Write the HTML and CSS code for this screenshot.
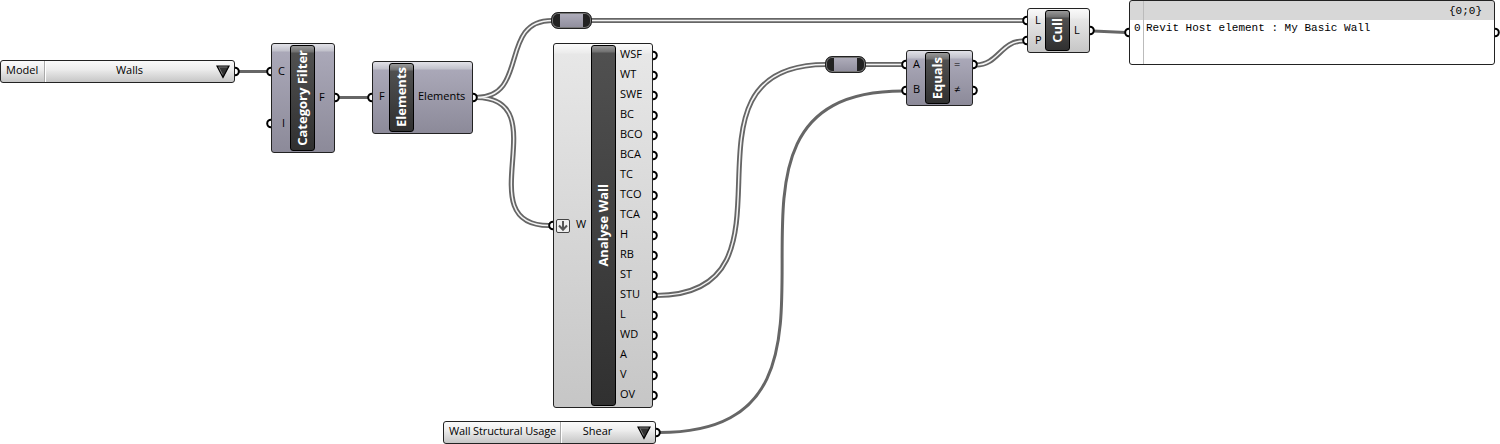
FILE: index.html
```html
<!DOCTYPE html>
<html lang="en">
<head>
<meta charset="utf-8">
<title>Wall definition</title>
<link rel="stylesheet" href="styles.css">
</head>
<body>
<main class="canvas">
<svg class="wires" width="1500" height="444" viewBox="0 0 1500 444">
  <defs>
    <path id="w1" d="M476 97.500C530 97.500 498 20.500 552 20.500"/>
    <path id="w2" d="M476 97.500C559 97.500 466 225.500 549 225.500"/>
    <path id="w3" d="M591 20.500H1024"/>
    <path id="w4" d="M656 295.500C816 295.500 660 64.500 826 64.500"/>
    <path id="w5" d="M865 64.500H903"/>
    <path id="w6" d="M976 65C998 65 1001 41 1023 41"/>
  </defs>
  <g class="wire">
    <path d="M239 71.500H268M338 97.500H369M1093 31L1126 32.500"/>
    <path d="M659 432.500C905 432.500 660 91 903 91"/>
  </g>
  <g class="wire-outer"><use href="#w1"/><use href="#w2"/><use href="#w3"/><use href="#w4"/><use href="#w5"/><use href="#w6"/></g>
  <g class="wire-inner"><use href="#w1"/><use href="#w2"/><use href="#w3"/><use href="#w4"/><use href="#w5"/><use href="#w6"/></g>
  <g class="grips">
    <circle cx="235" cy="71.500" r="3.800"/><circle cx="271" cy="71.500" r="3.800"/><circle cx="271" cy="123.500" r="3.800"/>
    <circle cx="335" cy="97.500" r="3.800"/><circle cx="372" cy="97.500" r="3.800"/><circle cx="473" cy="97.500" r="3.800"/>
    <circle cx="553" cy="225.500" r="3.800"/>
    <circle cx="653" cy="55.500" r="3.800"/><circle cx="653" cy="75.500" r="3.800"/><circle cx="653" cy="95.500" r="3.800"/>
    <circle cx="653" cy="115.500" r="3.800"/><circle cx="653" cy="135.500" r="3.800"/><circle cx="653" cy="155.500" r="3.800"/>
    <circle cx="653" cy="175.500" r="3.800"/><circle cx="653" cy="195.500" r="3.800"/><circle cx="653" cy="215.500" r="3.800"/>
    <circle cx="653" cy="235.500" r="3.800"/><circle cx="653" cy="255.500" r="3.800"/><circle cx="653" cy="275.500" r="3.800"/>
    <circle cx="653" cy="295.500" r="3.800"/><circle cx="653" cy="315.500" r="3.800"/><circle cx="653" cy="335.500" r="3.800"/>
    <circle cx="653" cy="355.500" r="3.800"/><circle cx="653" cy="375.500" r="3.800"/><circle cx="653" cy="395.500" r="3.800"/>
    <circle cx="656" cy="432.500" r="3.800"/>
    <circle cx="906" cy="64.500" r="3.800"/><circle cx="906" cy="90.500" r="3.800"/><circle cx="973" cy="64.500" r="3.800"/><circle cx="973" cy="90.500" r="3.800"/>
    <circle cx="1027" cy="20.500" r="3.800"/><circle cx="1027" cy="40.500" r="3.800"/><circle cx="1090" cy="30.500" r="3.800"/>
    <circle cx="1129" cy="32.500" r="3.800"/><circle cx="1495" cy="32.500" r="3.800"/>
  </g>
</svg>

<section class="node light picker model">
  <span class="name">Model</span><span class="value">Walls</span>
  <svg class="arrow" width="14" height="14" viewBox="0 0 14 14"><path class="arrow-fill" d="M1 1H13L7 12.500Z"/><path class="arrow-shine" d="M2.500 2H11.500M3 2.500L6.500 9.500"/></svg>
</section>

<section class="node violet category">
  <div class="ports in"><span>C</span><span>I</span></div>
  <div class="title"><span>Category Filter</span></div>
  <div class="ports out"><span>F</span></div>
</section>

<section class="node violet elements">
  <div class="ports in"><span>F</span></div>
  <div class="title"><span>Elements</span></div>
  <div class="ports out"><span>Elements</span></div>
</section>

<div class="relay relay-top"></div>

<section class="node light analyse">
  <div class="ports in">
    <svg class="flatten" width="14" height="14" viewBox="0 0 14 14"><rect class="flatten-box" x=".5" y=".5" width="13" height="13" rx="1.500"/><path class="flatten-arrow" d="M7 2V10.500M3 6.500L7 10.800L11 6.500"/></svg>
    <span>W</span>
  </div>
  <div class="title"><span>Analyse Wall</span></div>
  <div class="ports out">
    <span>WSF</span><span>WT</span><span>SWE</span><span>BC</span><span>BCO</span><span>BCA</span><span>TC</span><span>TCO</span><span>TCA</span><span>H</span><span>RB</span><span>ST</span><span>STU</span><span>L</span><span>WD</span><span>A</span><span>V</span><span>OV</span>
  </div>
</section>

<section class="node light picker usage">
  <span class="name">Wall Structural Usage</span><span class="value">Shear</span>
  <svg class="arrow" width="14" height="14" viewBox="0 0 14 14"><path class="arrow-fill" d="M1 1H13L7 12.500Z"/><path class="arrow-shine" d="M2.500 2H11.500M3 2.500L6.500 9.500"/></svg>
</section>

<div class="relay relay-mid"></div>

<section class="node violet equals">
  <div class="ports in"><span>A</span><span>B</span></div>
  <div class="title"><span>Equals</span></div>
  <div class="ports out"><span>=</span><span>≠</span></div>
</section>

<section class="node light cull">
  <div class="ports in"><span>L</span><span>P</span></div>
  <div class="title"><span>Cull</span></div>
  <div class="ports out"><span>L</span></div>
</section>

<section class="panel">
  <header class="path">{0;0}</header>
  <div class="row"><span class="index">0</span><span class="item">Revit Host element : My Basic Wall</span></div>
</section>
</main>
</body>
</html>
```
FILE: styles.css
```css
* { box-sizing: border-box; }
body { margin: 0; background: #fff; }
.canvas {
  position: relative;
  width: 1500px;
  height: 444px;
  overflow: hidden;
  font: 11px/20px "Open Sans", "Noto Sans", sans-serif;
  color: #000;
}
.wires { position: absolute; left: 0; top: 0; fill: none; }
.wire { stroke: #666; stroke-width: 3; }
.wire-outer { stroke: #666; stroke-width: 5.2; }
.wire-inner { stroke: #f4f4f4; stroke-width: 1.5; }
.grips { fill: #fff; stroke: #000; stroke-width: 2; }

/* Nodes on the free canvas */
.node {
  position: absolute;
  display: flex;
  border: 1px solid #222;
  border-radius: 3px;
}
.light { background: linear-gradient(#fafafa 0, #ececec 9px, #e7e7e7 10px, #c6c6c6 100%); }
.violet { background: linear-gradient(#e2e2e8 0, #c1c1cb 7px, #aaa8b8 8px, #8c8a99 100%); }
.model { left: 0; top: 60px; width: 235px; height: 23px; }
.category { left: 271px; top: 43px; width: 64px; height: 110px; }
.elements { left: 372px; top: 61px; width: 101px; height: 73px; }
.analyse { left: 553px; top: 43px; width: 100px; height: 365px; }
.usage { left: 443px; top: 421px; width: 213px; height: 23px; }
.equals { left: 906px; top: 50px; width: 67px; height: 56px; }
.cull { left: 1027px; top: 8px; width: 63px; height: 45px; }

/* Titles */
.title {
  flex: none;
  display: flex;
  align-items: center;
  justify-content: center;
  width: 25px;
  margin: 1px 0;
  border: 1px solid #000;
  border-radius: 3px;
  background: linear-gradient(#999 0, #707070 6px, #505050 7px, #303030 100%);
  color: #fff;
  font-weight: 700;
  font-size: 13px;
}
.title span { writing-mode: vertical-rl; transform: rotate(180deg); white-space: nowrap; line-height: 23px; }

/* Ports */
.ports { display: flex; flex-direction: column; justify-content: center; }
.category .in { width: 18px; padding-left: 6px; padding-bottom: 2px; gap: 32px; }
.category .in span:last-child { padding-left: 4px; }
.category .out { padding-left: 4px; padding-bottom: 2px; }
.elements .in { width: 16px; padding-left: 6px; padding-bottom: 3px; }
.elements .out { padding-left: 4px; padding-bottom: 3px; }
.analyse .in { flex-direction: row; align-items: center; justify-content: flex-start; width: 37px; padding-left: 2px; gap: 6px; }
.analyse .in span { padding-bottom: 3px; }
.analyse .out { padding-left: 4px; padding-bottom: 3px; }
.equals .in { width: 18px; padding-left: 6px; padding-bottom: 3px; gap: 5px; }
.equals .out { padding-left: 4px; padding-bottom: 3px; gap: 5px; }
.cull .in { width: 17px; padding-left: 7px; padding-bottom: 2px; }
.cull .out { padding-left: 4px; padding-bottom: 2px; }
.flatten-box { fill: #eee; stroke: #444; }
.flatten-arrow { fill: none; stroke: #555; stroke-width: 2; }

/* Value pickers */
.picker { align-items: center; padding-right: 4px; }
.name { height: 21px; padding-left: 5px; line-height: 18px; border-right: 1px solid #aaa; white-space: nowrap; }
.value { flex: 1; height: 21px; padding-right: 3px; line-height: 18px; text-align: center; border-left: 1px solid #fff; }
.model .name { width: 44px; }
.usage .name { width: 117px; letter-spacing: -0.12px; }
.usage .value { padding-right: 4px; }
.arrow-fill { fill: #333; stroke: #000; stroke-width: 1.2; }
.arrow-shine { stroke: #888; stroke-width: .8; }

/* Relays */
.relay {
  position: absolute;
  width: 41px;
  height: 17px;
  border: 1px solid #222;
  border-radius: 7px;
  box-shadow: inset 0 0 0 1px #777;
  background: linear-gradient(90deg, #222 8px, transparent 8px, transparent 31px, #222 31px), linear-gradient(#b0aebc, #8f8d9c);
}
.relay-top { left: 551px; top: 12px; }
.relay-mid { left: 825px; top: 56px; }

/* Output panel */
.panel {
  position: absolute;
  left: 1129px;
  top: 0;
  width: 366px;
  height: 65px;
  border: 1px solid #222;
  border-radius: 3px;
  background: linear-gradient(90deg, transparent 13px, #bbb 13px, #bbb 14px, transparent 14px), linear-gradient(#d7d7d7 19px, #fff 19px);
  font: 11px/16px "Liberation Mono", monospace;
}
.path { height: 19px; padding: 2px 12px 0 0; text-align: right; }
.row { display: flex; }
.index { width: 16px; padding-left: 4px; }
.item { white-space: pre; }
```
